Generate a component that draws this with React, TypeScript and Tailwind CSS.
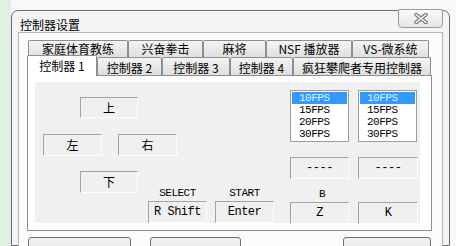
import React from 'react';

const cjk = "font-['Noto_Sans_CJK_SC','Liberation_Sans',sans-serif]";
const mono = 'font-mono text-[11px] tracking-[-0.5px]';

const backTabs = [
  { label: '家庭体育教练', w: 'w-[100px]' },
  { label: '兴奋拳击', w: 'w-[75px]' },
  { label: '麻将', w: 'w-[63px]' },
  { label: 'NSF 播放器', w: 'w-[86px]' },
  { label: 'VS-微系统', w: 'w-[77px]' },
];

const frontTabs = [
  { label: '控制器 2', w: 'w-[65px]' },
  { label: '控制器 3', w: 'w-[68px]' },
  { label: '控制器 4', w: 'w-[63px]' },
  { label: '疯狂攀爬者专用控制器', w: 'w-[138px]' },
];

const fps = ['10FPS', '15FPS', '20FPS', '30FPS'];

const Box = ({ children, className }: { children: React.ReactNode; className: string }) => (
  <div
    className={`flex h-[22px] items-center justify-center border border-[#a3a3a3] border-r-[#fdfdfd] border-b-[#fdfdfd] text-[12px] leading-none text-black ${className}`}
  >
    {children}
  </div>
);

const ListBox = () => (
  <div className="h-[52px] w-[59px] border border-[#9c9c9c] bg-white p-px">
    {fps.map((f, i) => (
      <div
        key={f}
        className={`flex h-[12px] items-center overflow-hidden pl-[7px] leading-[12px] ${mono} ${
          i === 0 ? 'bg-[#3399ff] text-[#dff5ff]' : 'text-black'
        }`}
      >
        {f}
      </div>
    ))}
  </div>
);

const CloseGlyph = () => (
  <svg width="14" height="11" viewBox="0 0 14 11">
    <path d="M2 1.5 L12 9.5 M12 1.5 L2 9.5" stroke="#727272" strokeWidth="3.6" strokeLinecap="round" />
    <path d="M2 1.5 L12 9.5 M12 1.5 L2 9.5" stroke="#ffffff" strokeWidth="1.5" strokeLinecap="round" />
  </svg>
);

export default function App() {
  return (
    <div className={`flex h-[246px] w-[456px] overflow-hidden bg-[#f7f8f7] ${cjk}`}>
      {/* desktop strip */}
      <div className="w-[11px] shrink-0 bg-[#e1f0e2]" />

      {/* window */}
      <div className="mt-[10px] flex w-[439px] shrink-0 flex-col rounded-t-[7px] border border-[#6a6a6a] bg-[#f3f4f5]">
        {/* title bar */}
        <div className="flex h-[26px] items-start">
          <span className="ml-[8px] mt-[7px] text-[12px] leading-[14px] text-black">控制器设置</span>
          <div className="-mt-[2px] ml-auto mr-[6px] flex h-[19px] w-[45px] items-center justify-center rounded-b-[4px] rounded-t-[2px] border border-[#9a9a9a] bg-gradient-to-b from-[#fafafa] to-[#e6e6e6]">
            <CloseGlyph />
          </div>
        </div>

        {/* client area */}
        <div className="mx-[6px] flex-1 border border-[#b4b4b4] bg-[#fbfbfb]">
          <div className="ml-[8px] mt-[7px] w-[405px]">
            {/* back row of tabs */}
            <div className="ml-px flex h-[17px]">
              {backTabs.map((t) => (
                <div
                  key={t.label}
                  className={`flex ${t.w} items-center justify-center rounded-t-[2px] border border-b-0 border-[#8c8e94] bg-gradient-to-b from-[#f4f4f4] to-[#e0e0e0] text-[12px] leading-none text-black`}
                >
                  {t.label}
                </div>
              ))}
            </div>

            {/* front row of tabs */}
            <div className="flex h-[18px] items-end">
              <div className="relative z-10 -mb-px flex h-[21px] w-[70px] items-center justify-center rounded-t-[2px] border border-b-0 border-[#8c8e94] bg-white text-[12px] leading-none text-black">
                控制器 1
              </div>
              {frontTabs.map((t) => (
                <div
                  key={t.label}
                  className={`flex h-[18px] ${t.w} items-center justify-center rounded-t-[2px] border border-b-0 border-[#8c8e94] bg-gradient-to-b from-[#f4f4f4] to-[#dedede] pt-[2px] text-[12px] leading-none text-black`}
                >
                  {t.label}
                </div>
              ))}
            </div>

            {/* tab page */}
            <div className="h-[156px] w-[405px] border border-[#8c8e94] bg-white">
              <div className="ml-[7px] mt-[6px] flex h-[141px] w-[385px] bg-[#f0f0f0]">
                {/* d-pad + select/start */}
                <div className="flex w-[245px] flex-col">
                  <Box className="ml-[45px] mt-[15px] w-[58px]">上</Box>
                  <div className="mt-[16px] flex">
                    <Box className="ml-[8px] w-[59px]">左</Box>
                    <Box className="ml-[16px] w-[59px]">右</Box>
                  </div>
                  <div className="mt-[15px] flex items-start">
                    <Box className="ml-[45px] w-[58px]">下</Box>
                    <div className="ml-[10px] mt-[14px] flex flex-col">
                      <div className={`flex h-[16px] items-center text-black ${mono}`}>
                        <span className="w-[59px] text-center">SELECT</span>
                        <span className="ml-[8px] w-[59px] text-center">START</span>
                      </div>
                      <div className="flex">
                        <Box className={`h-[21px] w-[59px] ${mono}`}>R Shift</Box>
                        <Box className={`ml-[8px] h-[21px] w-[59px] ${mono}`}>Enter</Box>
                      </div>
                    </div>
                  </div>
                </div>

                {/* turbo columns */}
                <div className="ml-[10px] flex flex-col">
                  <div className="mt-[8px] flex gap-[9px]">
                    <ListBox />
                    <ListBox />
                  </div>
                  <div className="mt-[15px] flex gap-[9px]">
                    <Box className={`w-[59px] ${mono}`}>----</Box>
                    <Box className={`w-[60px] ${mono}`}>----</Box>
                  </div>
                  <div className={`mt-[7px] flex h-[16px] items-center text-black ${mono}`}>
                    <span className="w-[64px] text-center">B</span>
                  </div>
                  <div className="flex gap-[9px]">
                    <Box className={`h-[21px] w-[59px] ${mono}`}>Z</Box>
                    <Box className={`h-[21px] w-[60px] ${mono}`}>K</Box>
                  </div>
                </div>
              </div>
            </div>

            {/* dialog buttons (cut off) */}
            <div className="ml-px mt-[6px] flex">
              <div className="h-[22px] w-[103px] rounded-[3px] border border-[#6f6f6f] bg-gradient-to-b from-[#f3f3f3] to-[#dcdcdc]" />
              <div className="ml-[19px] h-[22px] w-[91px] rounded-[3px] border border-[#6f6f6f] bg-gradient-to-b from-[#f3f3f3] to-[#dcdcdc]" />
              <div className="ml-[102px] h-[22px] w-[88px] rounded-[3px] border border-[#6f6f6f] bg-gradient-to-b from-[#f3f3f3] to-[#dcdcdc]" />
            </div>
          </div>
        </div>
      </div>
    </div>
  );
}
